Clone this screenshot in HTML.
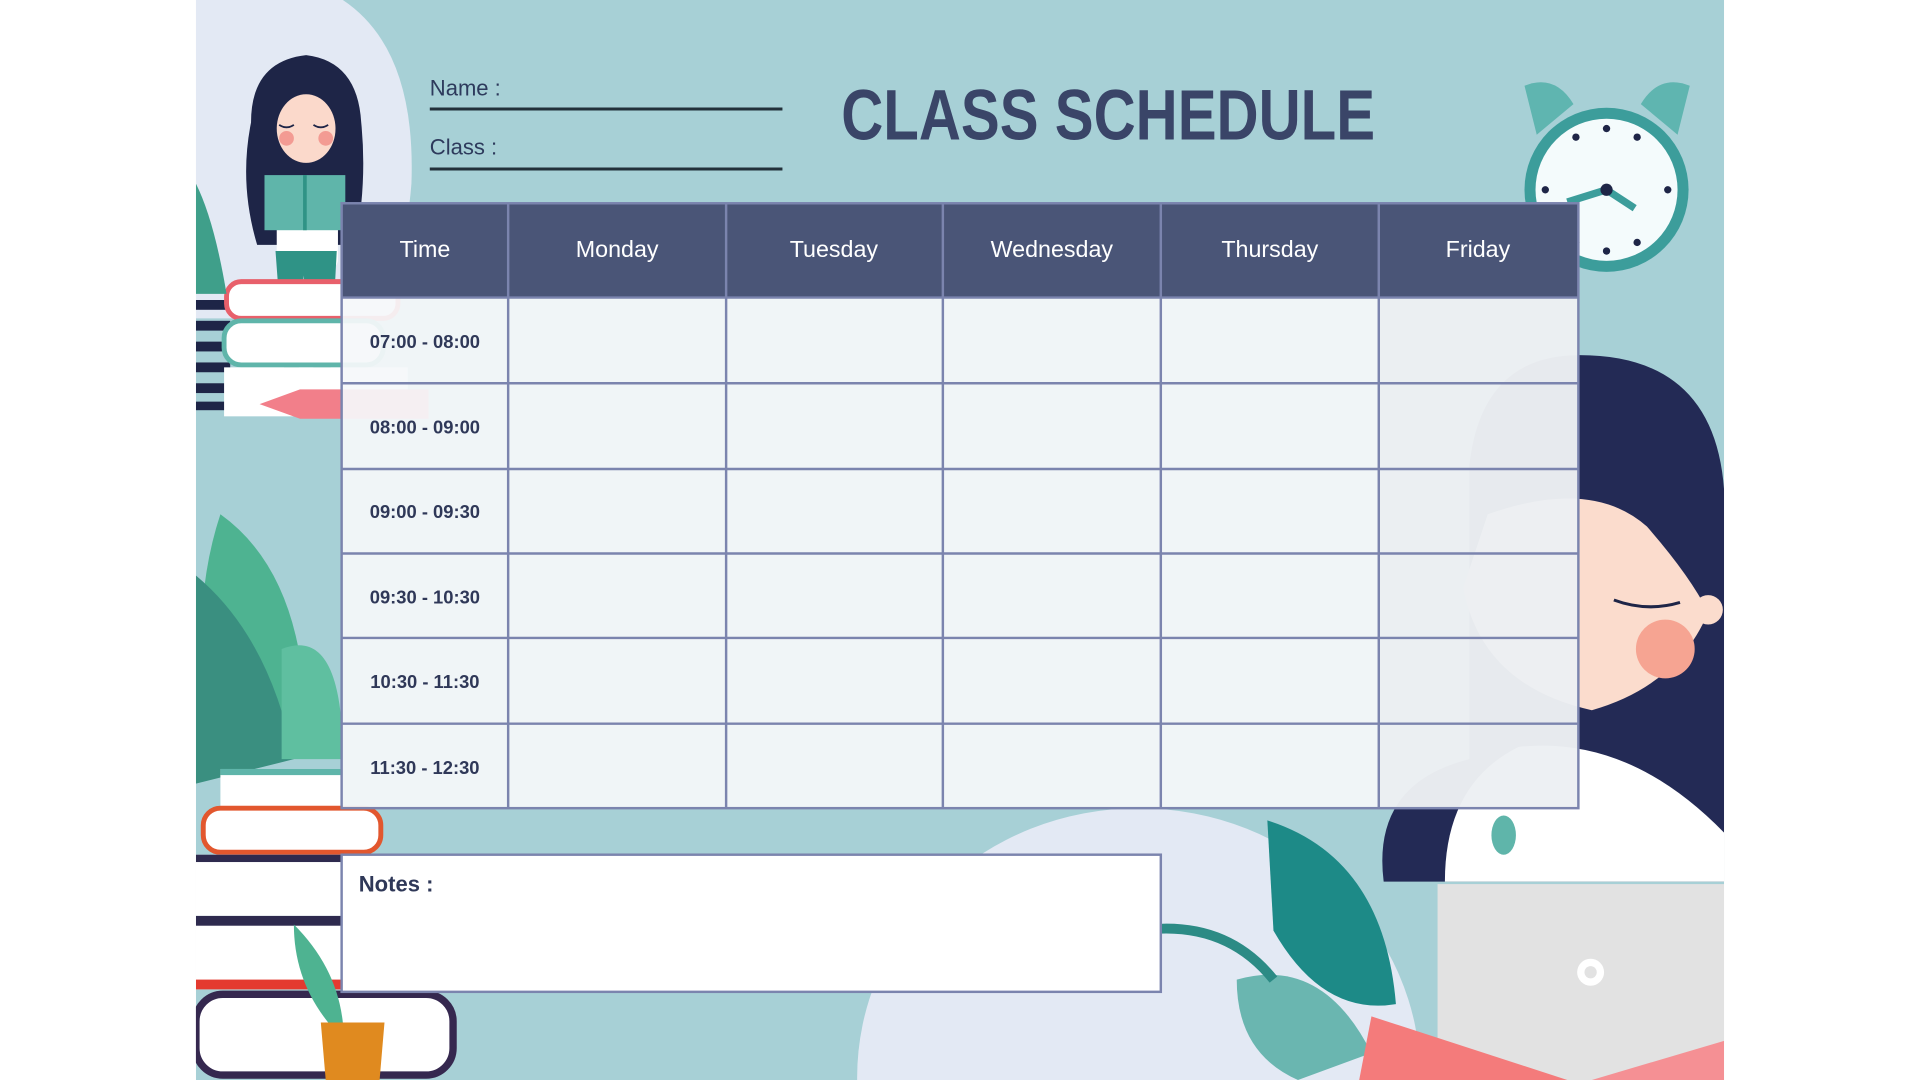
<!DOCTYPE html>
<html><head><meta charset="utf-8"><style>
html,body{margin:0;padding:0;background:#fff;width:1920px;height:1080px;overflow:hidden;position:relative}
svg{display:block;position:absolute;left:0;top:0}
text{font-family:"Liberation Sans",sans-serif}
</style></head><body>
<svg width="1920" height="1080" viewBox="0 0 1568 882" xmlns="http://www.w3.org/2000/svg">
<defs><clipPath id="c"><rect x="160" y="0" width="1248" height="882"/></clipPath></defs>
<rect width="1568" height="882" fill="#fff"/>
<g clip-path="url(#c)">
<rect x="160" y="0" width="1248" height="882" fill="#a7d0d6"/>
<path d="M160 0 H280 Q340 40 336 150 Q330 230 290 260 L160 260 Z" fill="#e3e9f4"/>
<ellipse cx="930" cy="880" rx="230" ry="220" fill="#e3e9f4"/>
<!-- left girl -->
<path d="M250 45 Q205 50 205 100 Q195 150 210 200 L290 200 Q300 150 295 100 Q292 50 250 45Z" fill="#1e2547"/>
<ellipse cx="250" cy="105" rx="24" ry="28" fill="#fbd9cb"/>
<circle cx="234" cy="113" r="6" fill="#f39b93"/><circle cx="266" cy="113" r="6" fill="#f39b93"/>
<path d="M228 102 q6 4 12 0 M256 102 q6 4 12 0" stroke="#1e2547" stroke-width="1.5" fill="none"/>
<rect x="226" y="150" width="50" height="70" rx="8" fill="#fff"/>
<rect x="216" y="143" width="66" height="45" fill="#5fb5aa"/>
<line x1="249" y1="143" x2="249" y2="188" stroke="#2f9386" stroke-width="3"/>
<path d="M225 205 L232 300 L244 300 L248 225 L256 300 L270 300 L275 205Z" fill="#2f9386"/>
<!-- left books -->
<g fill="#1e2547"><rect x="160" y="245" width="28" height="8"/><rect x="160" y="262" width="28" height="8"/><rect x="160" y="279" width="28" height="8"/><rect x="160" y="296" width="28" height="8"/><rect x="160" y="313" width="28" height="8"/><rect x="160" y="328" width="28" height="7"/></g>
<rect x="185" y="230" width="140" height="30" rx="12" fill="#fff" stroke="#e8606b" stroke-width="4"/>
<rect x="183" y="262" width="130" height="36" rx="14" fill="#fff" stroke="#5fb5aa" stroke-width="4"/>
<rect x="183" y="300" width="150" height="40" fill="#fff"/>
<path d="M212 330 L245 318 L350 318 L350 342 L245 342Z" fill="#f27f8a"/>
<!-- plants left -->
<path d="M160 150 Q175 180 185 240 L160 240Z" fill="#3f9f8a"/>
<path d="M180 420 Q250 470 250 600 Q200 610 165 560 Q160 480 180 420Z" fill="#4eb391"/>
<path d="M160 470 Q220 520 240 620 L160 640Z" fill="#3a8f80"/>
<path d="M230 530 Q280 510 280 620 L230 620Z" fill="#5fbfa0"/>
<!-- bottom left books -->
<rect x="180" y="628" width="100" height="32" fill="#fff"/><rect x="180" y="628" width="100" height="5" fill="#5fb5aa"/>
<rect x="166" y="660" width="145" height="36" rx="14" fill="#fff" stroke="#e2572e" stroke-width="4"/>
<rect x="160" y="698" width="120" height="50" fill="#fff"/><rect x="160" y="698" width="120" height="6" fill="#2e2a4e"/>
<rect x="160" y="748" width="120" height="60" fill="#fff"/><rect x="160" y="748" width="120" height="8" fill="#2e2a4e"/><rect x="160" y="800" width="120" height="8" fill="#e43a2f"/>
<rect x="160" y="812" width="210" height="66" rx="22" fill="#fff" stroke="#35284f" stroke-width="6"/>
<path d="M262 835 L314 835 L310 882 L266 882Z" fill="#e08a1f"/>
<path d="M240 755 Q275 790 280 835 L268 835 Q240 800 240 755Z" fill="#4eb391"/>
<!-- clock -->
<path d="M1245 70 Q1270 60 1285 85 L1255 110Z" fill="#5fb5b0"/><path d="M1380 70 Q1355 60 1340 85 L1370 110Z" fill="#5fb5b0"/>
<circle cx="1312" cy="155" r="67" fill="#3c9d9b"/>
<circle cx="1312" cy="155" r="58" fill="#f4fbfc"/>
<g fill="#1e2547"><circle cx="1312" cy="105" r="3"/><circle cx="1312" cy="205" r="3"/><circle cx="1262" cy="155" r="3"/><circle cx="1362" cy="155" r="3"/><circle cx="1337" cy="112" r="3"/><circle cx="1287" cy="112" r="3"/><circle cx="1337" cy="198" r="3"/><circle cx="1287" cy="198" r="3"/></g>
<path d="M1312 155 L1280 165 M1312 155 L1335 170" stroke="#3c9d9b" stroke-width="6"/>
<circle cx="1312" cy="155" r="5" fill="#1e2547"/>
<!-- bottom right plants -->
<path d="M1035 670 Q1130 700 1140 820 Q1080 830 1040 760Z" fill="#1d8a87"/>
<path d="M1010 800 Q1080 780 1120 860 L1060 882 Q1010 860 1010 800Z" fill="#6ab6b0"/>
<path d="M930 760 Q1000 750 1040 800" stroke="#2c8b85" stroke-width="8" fill="none"/>
<!-- right woman -->
<path d="M1290 290 Q1400 290 1408 400 L1408 720 L1130 720 Q1120 640 1200 620 L1200 380 Q1210 290 1290 290Z" fill="#232a55"/>
<path d="M1215 420 Q1300 390 1345 430 Q1380 470 1395 500 Q1370 560 1300 580 Q1210 560 1195 480Z" fill="#fbdccd"/>
<circle cx="1395" cy="498" r="12" fill="#fbdccd"/>
<path d="M1318 490 Q1345 500 1372 492" stroke="#1e2547" stroke-width="2.5" fill="none"/>
<circle cx="1360" cy="530" r="24" fill="#f6a492"/>
<path d="M1240 610 Q1330 600 1408 680 L1408 720 L1180 720 Q1180 640 1240 610Z" fill="#fff"/>
<path d="M1205 650 Q1240 650 1245 700 L1215 710Z" fill="#fff"/><ellipse cx="1228" cy="682" rx="10" ry="16" fill="#5fb5aa"/>
<rect x="1174" y="722" width="234" height="160" fill="#e2e2e2"/>
<circle cx="1299" cy="794" r="11" fill="#fff"/><circle cx="1299" cy="794" r="5" fill="#e2e2e2"/>
<path d="M1110 882 L1120 830 L1280 882Z" fill="#f47b7b"/><path d="M1408 850 L1300 882 L1408 882Z" fill="#f59094"/>
</g>
<text x="351" y="78" font-size="18" fill="#2d3a5c">Name :</text>
<line x1="351" y1="89" x2="639" y2="89" stroke="#22303a" stroke-width="2.5"/>
<text x="351" y="126" font-size="18" fill="#2d3a5c">Class :</text>
<line x1="351" y1="138" x2="639" y2="138" stroke="#22303a" stroke-width="2.5"/>
<text x="905" y="114" font-size="58" font-weight="bold" fill="#3a4568" text-anchor="middle" textLength="436" lengthAdjust="spacingAndGlyphs">CLASS SCHEDULE</text>
<rect x="279" y="166" width="1010" height="77" fill="#4a5577"/>
<rect x="279" y="243" width="1010" height="417" fill="#f5f8fa" opacity="0.93"/>
<rect x="1126" y="243" width="163" height="417" fill="#e8ebef" opacity="0.6"/>
<g stroke="#7b84ae" stroke-width="2" fill="none">
<rect x="279" y="166" width="1010" height="494"/>
<line x1="279" y1="243" x2="1289" y2="243"/><line x1="279" y1="313" x2="1289" y2="313"/><line x1="279" y1="383" x2="1289" y2="383"/><line x1="279" y1="452" x2="1289" y2="452"/><line x1="279" y1="521" x2="1289" y2="521"/><line x1="279" y1="591" x2="1289" y2="591"/>
<line x1="415" y1="166" x2="415" y2="660"/><line x1="593" y1="166" x2="593" y2="660"/><line x1="770" y1="166" x2="770" y2="660"/><line x1="948" y1="166" x2="948" y2="660"/><line x1="1126" y1="166" x2="1126" y2="660"/>
</g>
<g fill="#fff" font-size="19" text-anchor="middle">
<text x="347" y="210">Time</text><text x="504" y="210">Monday</text><text x="681" y="210">Tuesday</text><text x="859" y="210">Wednesday</text><text x="1037" y="210">Thursday</text><text x="1207" y="210">Friday</text>
</g>
<g fill="#2f3858" font-size="15" font-weight="bold" text-anchor="middle">
<text x="347" y="284">07:00 - 08:00</text><text x="347" y="354">08:00 - 09:00</text><text x="347" y="423">09:00 - 09:30</text><text x="347" y="493">09:30 - 10:30</text><text x="347" y="562">10:30 - 11:30</text><text x="347" y="632">11:30 - 12:30</text>
</g>
<rect x="279" y="698" width="669" height="112" fill="#fff" stroke="#7b84ae" stroke-width="2"/>
<text x="293" y="728" font-size="18" font-weight="bold" fill="#2f3858">Notes :</text>
</svg>
</body></html>
